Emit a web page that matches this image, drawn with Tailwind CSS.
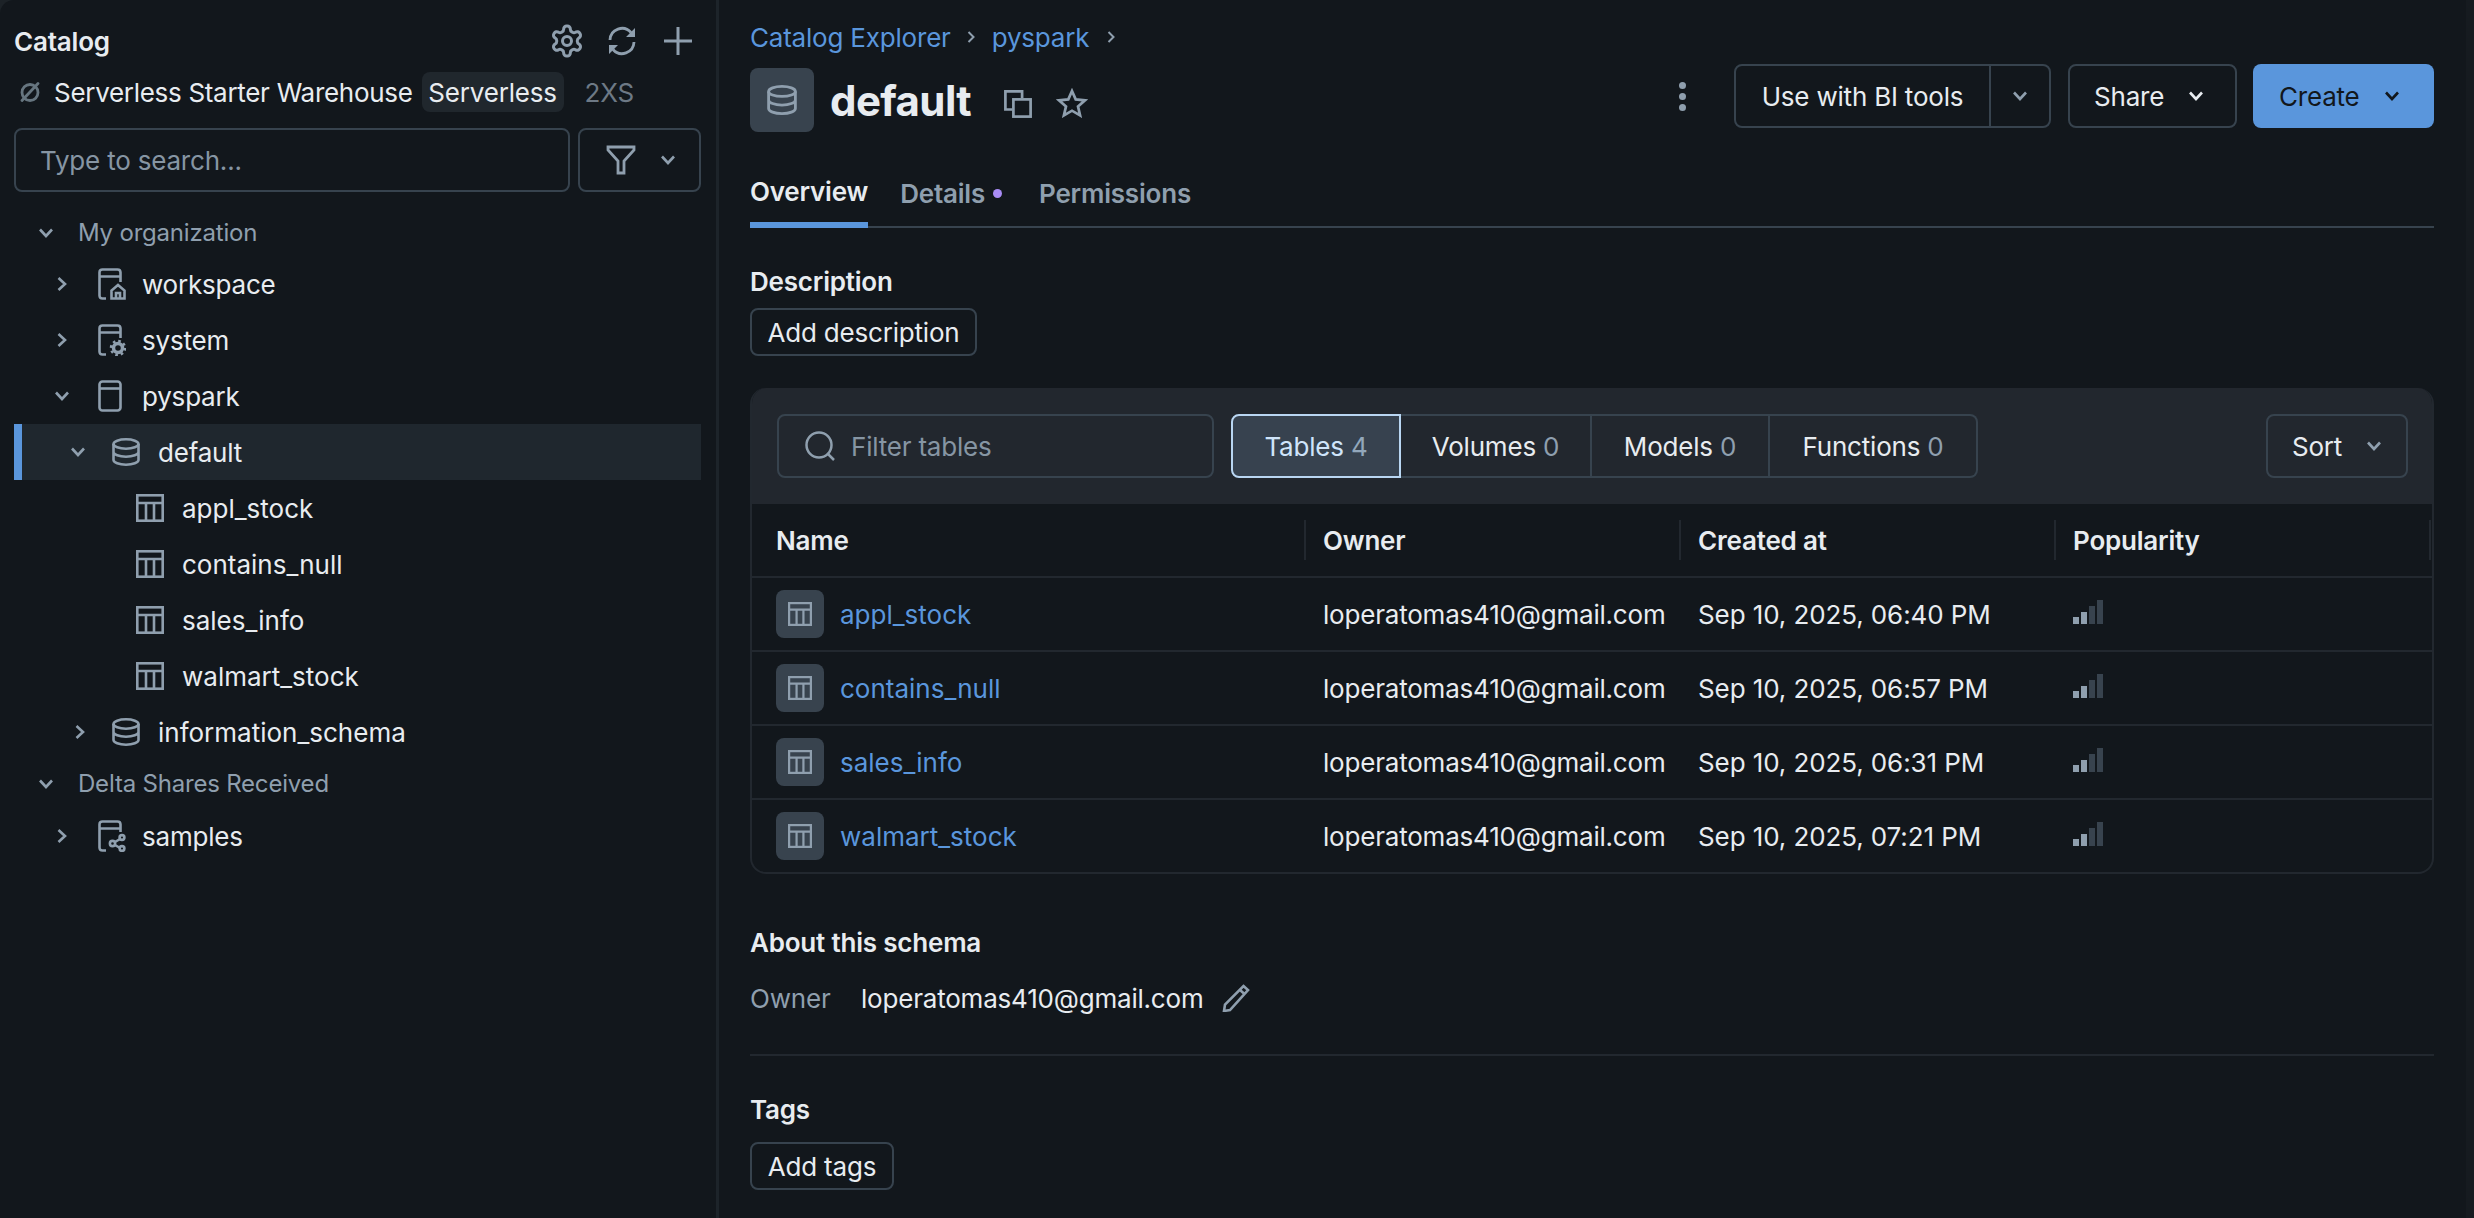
<!DOCTYPE html>
<html lang="en">
<head>
  <meta charset="utf-8">
  <title>Catalog</title>
  <script src="https://cdn.jsdelivr.net/npm/@tailwindcss/browser@4"></script>
</head>
<body class="bg-[#1c2227] font-['Inter','Liberation_Sans',sans-serif] text-[26px] tracking-[-0.2px] text-[#e8ecf0] overflow-hidden">
  <svg class="hidden">
    <symbol id="chev-d" viewBox="0 0 16 12"><path d="M2 2.5 8 9l6-6.500" fill="none" stroke="currentColor" stroke-width="2.6"/></symbol>
    <symbol id="chev-r" viewBox="0 0 12 16"><path d="M2.500 2 9 8l-6.500 6" fill="none" stroke="currentColor" stroke-width="2.6"/></symbol>
    <symbol id="db" viewBox="0 0 28 28"><g fill="none" stroke="currentColor" stroke-width="2.600"><ellipse cx="14" cy="6" rx="12.500" ry="4.700"/><path d="M1.500 6v16c0 2.600 5.600 4.700 12.500 4.700s12.500-2.100 12.500-4.700V6M1.500 14c0 2.600 5.600 4.700 12.500 4.700s12.500-2.100 12.500-4.700"/></g></symbol>
    <symbol id="tbl" viewBox="0 0 28 28"><g fill="none" stroke="currentColor" stroke-width="2.600"><rect x="1.300" y="1.300" width="25.400" height="25.400"/><path d="M1 9h26M10 9v18M18 9v18"/></g></symbol>
    <symbol id="cat-home" viewBox="0 0 28 32"><g fill="none" stroke="currentColor" stroke-width="2.600"><path d="M8 30.500H4.500q-3 0-3-3V4.500q0-3 3-3h15q3 0 3 3V14M1.500 8.500h21"/><path d="M13.500 30.500v-8l6.500-5.500 6.500 5.500v8zM18 30v-5h4v5"/></g></symbol>
    <symbol id="cat-gear" viewBox="0 0 28 32"><g fill="none" stroke="currentColor" stroke-width="2.600"><path d="M8 30.500H4.500q-3 0-3-3V4.500q0-3 3-3h15q3 0 3 3V14M1.500 8.500h21"/></g><circle cx="20" cy="24" r="4.500" fill="none" stroke="currentColor" stroke-width="3.500"/><circle cx="20" cy="24" r="7" fill="none" stroke="currentColor" stroke-width="2.500" stroke-dasharray="2.600 2.900"/></symbol>
    <symbol id="cat-share" viewBox="0 0 28 32"><g fill="none" stroke="currentColor" stroke-width="2.600"><path d="M8 30.500H4.500q-3 0-3-3V4.500q0-3 3-3h15q3 0 3 3V12M1.500 8.500h21"/><circle cx="14.500" cy="23.500" r="2.600"/><circle cx="24" cy="17.500" r="2.400"/><circle cx="24" cy="28.500" r="2.400"/><path d="m17 22 5-3M17 25l5 3"/></g></symbol>
    <symbol id="cat" viewBox="0 0 28 32"><g fill="none" stroke="currentColor" stroke-width="2.600"><rect x="1.500" y="1.500" width="21" height="29" rx="3"/><path d="M1.500 8.500h21"/></g></symbol>
  </svg>

  <div class="flex h-[1218px] w-[2474px] overflow-hidden rounded-tl-[14px] bg-[#12171c]">
    <aside class="w-[719px] shrink-0 border-r-[3px] border-[#1d242a] pl-[14px] pr-[15px]">
      <div class="mt-[21px] flex h-[40px] items-center">
        <span class="font-semibold">Catalog</span>
        <div class="ml-auto flex items-center text-[#8f9fae]">
          <svg class="mr-[22px]" width="36" height="36" viewBox="0 0 24 24" fill="none" stroke="currentColor" stroke-width="2"><path d="M12.220 2h-.44a2 2 0 0 0-2 2v.18a2 2 0 0 1-1 1.730l-.43.25a2 2 0 0 1-2 0l-.15-.08a2 2 0 0 0-2.730.73l-.22.38a2 2 0 0 0 .73 2.730l.15.1a2 2 0 0 1 1 1.720v.51a2 2 0 0 1-1 1.740l-.15.09a2 2 0 0 0-.73 2.730l.22.38a2 2 0 0 0 2.730.73l.15-.08a2 2 0 0 1 2 0l.43.25a2 2 0 0 1 1 1.730V20a2 2 0 0 0 2 2h.44a2 2 0 0 0 2-2v-.18a2 2 0 0 1 1-1.730l.43-.25a2 2 0 0 1 2 0l.15.08a2 2 0 0 0 2.730-.73l.22-.39a2 2 0 0 0-.73-2.730l-.15-.08a2 2 0 0 1-1-1.740v-.5a2 2 0 0 1 1-1.740l.15-.09a2 2 0 0 0 .73-2.730l-.22-.38a2 2 0 0 0-2.730-.73l-.15.08a2 2 0 0 1-2 0l-.43-.25a2 2 0 0 1-1-1.730V4a2 2 0 0 0-2-2z"/><circle cx="12" cy="12" r="3"/></svg>
          <svg class="mr-[26px]" width="30" height="30" viewBox="0 0 30 30" fill="none" stroke="currentColor" stroke-width="2.800"><path d="M3 14A12 12 0 0 1 24 6.500M27 16A12 12 0 0 1 6 23.500"/><path d="M28 2v9h-9zM2 28v-9h9z" fill="currentColor" stroke="none"/></svg>
          <svg class="mr-[8px]" width="30" height="30" viewBox="0 0 30 30" stroke="currentColor" stroke-width="3"><path d="M15 1v28M1 15h28"/></svg>
        </div>
      </div>

      <div class="mt-[11px] flex h-[40px] items-center">
        <svg class="ml-[6px] mr-[14px]" width="20" height="20" viewBox="0 0 20 20" fill="none" stroke="#66757f" stroke-width="2.800" stroke-linecap="round"><circle cx="10" cy="10.500" r="8"/><path d="M2 18.500 18 1.500"/></svg>
        <span class="tracking-[-0.3px]">Serverless Starter Warehouse</span>
        <span class="ml-[9px] flex h-[40px] w-[142px] items-center justify-center rounded-lg bg-[#20272d]">Serverless</span>
        <span class="ml-[21px] text-[#6d7985]">2XS</span>
      </div>

      <div class="mt-[16px] flex h-[64px] gap-[8px]">
        <div class="flex h-[64px] w-[557px] items-center rounded-lg border-2 border-[#37434e] pl-[24px] text-[#8695a3]">Type to search...</div>
        <div class="flex h-[64px] w-[123px] items-center rounded-lg border-2 border-[#37434e] pl-[26px] text-[#8f9fae]">
          <svg width="30" height="30" viewBox="0 0 30 30" fill="none" stroke="currentColor" stroke-width="2.800"><path d="M2 2h26v3L18 16v12h-6V16L2 5z"/></svg>
          <svg class="ml-[24px]" width="16" height="12"><use href="#chev-d"/></svg>
        </div>
      </div>

      <ul class="mt-[18px] list-none">
        <li class="flex h-[46px] items-center pl-[24px] text-[24px] text-[#8f9fae]">
          <svg class="mr-[24px]" width="16" height="12"><use href="#chev-d"/></svg>My organization
        </li>
        <li class="flex h-[56px] items-center pl-[42px]">
          <svg class="mr-[30px] text-[#8f9fae]" width="12" height="16"><use href="#chev-r"/></svg>
          <svg class="mr-[16px] text-[#8f9fae]" width="28" height="32"><use href="#cat-home"/></svg>workspace
        </li>
        <li class="flex h-[56px] items-center pl-[42px]">
          <svg class="mr-[30px] text-[#8f9fae]" width="12" height="16"><use href="#chev-r"/></svg>
          <svg class="mr-[16px] text-[#8f9fae]" width="28" height="32"><use href="#cat-gear"/></svg>system
        </li>
        <li class="flex h-[56px] items-center pl-[40px]">
          <svg class="mr-[28px] text-[#8f9fae]" width="16" height="12"><use href="#chev-d"/></svg>
          <svg class="mr-[16px] text-[#8f9fae]" width="28" height="32"><use href="#cat"/></svg>pyspark
        </li>
        <li class="flex h-[56px] items-center border-l-8 border-[#5a96dc] bg-[#1f272e] pl-[48px]">
          <svg class="mr-[26px] text-[#8f9fae]" width="16" height="12"><use href="#chev-d"/></svg>
          <svg class="mr-[18px] text-[#8f9fae]" width="28" height="28"><use href="#db"/></svg>default
        </li>
        <li class="flex h-[56px] items-center pl-[122px] tracking-normal"><svg class="mr-[18px] text-[#8f9fae]" width="28" height="28"><use href="#tbl"/></svg>appl_stock</li>
        <li class="flex h-[56px] items-center pl-[122px] tracking-normal"><svg class="mr-[18px] text-[#8f9fae]" width="28" height="28"><use href="#tbl"/></svg>contains_null</li>
        <li class="flex h-[56px] items-center pl-[122px] tracking-normal"><svg class="mr-[18px] text-[#8f9fae]" width="28" height="28"><use href="#tbl"/></svg>sales_info</li>
        <li class="flex h-[56px] items-center pl-[122px] tracking-normal"><svg class="mr-[18px] text-[#8f9fae]" width="28" height="28"><use href="#tbl"/></svg>walmart_stock</li>
        <li class="flex h-[56px] items-center pl-[60px] tracking-normal">
          <svg class="mr-[26px] text-[#8f9fae]" width="12" height="16"><use href="#chev-r"/></svg>
          <svg class="mr-[18px] text-[#8f9fae]" width="28" height="28"><use href="#db"/></svg>information_schema
        </li>
        <li class="flex h-[48px] items-center pl-[24px] text-[24px] text-[#8f9fae]">
          <svg class="mr-[24px]" width="16" height="12"><use href="#chev-d"/></svg>Delta Shares Received
        </li>
        <li class="flex h-[56px] items-center pl-[42px]">
          <svg class="mr-[30px] text-[#8f9fae]" width="12" height="16"><use href="#chev-r"/></svg>
          <svg class="mr-[16px] text-[#8f9fae]" width="28" height="32"><use href="#cat-share"/></svg>samples
        </li>
      </ul>
    </aside>

    <main class="min-w-0 flex-1 pl-[31px] pr-[32px]">
      <nav class="mt-[17px] flex h-[40px] items-center text-[#5a96dc]">
        <span>Catalog Explorer</span>
        <svg class="mx-[16px] text-[#8f9fae]" width="9" height="14" viewBox="0 0 9 14" fill="none" stroke="currentColor" stroke-width="2"><path d="m1.500 2 5 5-5 5"/></svg>
        <span>pyspark</span>
        <svg class="ml-[18px] text-[#8f9fae]" width="9" height="14" viewBox="0 0 9 14" fill="none" stroke="currentColor" stroke-width="2"><path d="m1.500 2 5 5-5 5"/></svg>
      </nav>

      <div class="mt-[7px] flex h-[68px] items-start">
        <div class="mt-[4px] flex h-[64px] w-[64px] items-center justify-center rounded-lg bg-[#38434e] text-[#8f9fae]">
          <svg width="30" height="30"><use href="#db"/></svg>
        </div>
        <h1 class="ml-[16px] mt-[9px] text-[42px] font-bold leading-[56px] tracking-[-0.6px]">default</h1>
        <svg class="ml-[33px] mt-[26px] text-[#8f9fae]" width="28" height="28" viewBox="0 0 28 28" fill="none" stroke="currentColor" stroke-width="2.700"><path d="M8 19.500H1.400V1.400h16.700V8"/><rect x="9.400" y="9.400" width="17.200" height="17.200"/></svg>
        <svg class="ml-[24px] mt-[24px] text-[#8f9fae]" width="32" height="30" viewBox="0 0 32 30" fill="none" stroke="currentColor" stroke-width="2.700"><path d="m16 3 3.700 8.400 9.300.9-7 6.100 2.100 9L16 22.700 7.900 27.400l2.100-9-7-6.100 9.300-.9z"/></svg>
        <div class="ml-auto flex items-center">
          <div class="mr-[48px] flex flex-col gap-[4px]">
            <span class="h-[7px] w-[7px] rounded-full bg-[#8f9fae]"></span>
            <span class="h-[7px] w-[7px] rounded-full bg-[#8f9fae]"></span>
            <span class="h-[7px] w-[7px] rounded-full bg-[#8f9fae]"></span>
          </div>
          <div class="flex h-[64px] w-[317px] items-center rounded-lg border-2 border-[#37434e]">
            <span class="flex w-[253px] justify-center">Use with BI tools</span>
            <span class="flex h-full flex-1 items-center justify-center border-l-2 border-[#37434e] text-[#8f9fae]"><svg width="16" height="12"><use href="#chev-d"/></svg></span>
          </div>
          <div class="ml-[17px] flex h-[64px] w-[169px] items-center rounded-lg border-2 border-[#37434e] pl-[24px]">
            Share<svg class="ml-[24px]" width="16" height="12"><use href="#chev-d"/></svg>
          </div>
          <div class="ml-[16px] flex h-[64px] w-[181px] items-center rounded-lg bg-[#5a96dc] pl-[26px] text-[#12171c]">
            Create<svg class="ml-[24px]" width="16" height="12"><use href="#chev-d"/></svg>
          </div>
        </div>
      </div>

      <div class="mt-[28px] flex h-[68px] gap-[32px] border-b-2 border-[#37434e] font-semibold text-[#8f9fae]">
        <span class="-mb-[2px] flex h-[68px] items-center border-b-[6px] border-[#5a96dc] text-[#e8ecf0]">Overview</span>
        <span class="flex h-[66px] items-center">Details<span class="ml-[8px] h-[9px] w-[9px] rounded-full bg-[#a98cf5]"></span></span>
        <span class="ml-[5px] flex h-[66px] items-center">Permissions</span>
      </div>

      <h2 class="mt-[33px] flex h-[40px] items-center font-semibold">Description</h2>
      <div class="mt-[7px] flex h-[48px] w-[227px] items-center justify-center rounded-lg border-2 border-[#37434e]">Add description</div>

      <section class="mt-[32px] overflow-hidden rounded-2xl border-2 border-t-0 border-[#22282f]">
        <div class="-mx-[2px] flex h-[116px] items-center bg-[#22272e] pl-[27px] pr-[26px]">
          <div class="flex h-[64px] w-[437px] items-center rounded-lg border-2 border-[#37434e] pl-[26px] text-[#8695a3]">
            <svg class="mr-[16px] text-[#8f9fae]" width="30" height="30" viewBox="0 0 30 30" fill="none" stroke="currentColor" stroke-width="2.500"><circle cx="14" cy="14" r="12.500"/><path d="m23 23 6 6"/></svg>Filter tables
          </div>
          <div class="ml-[17px] flex h-[64px]">
            <span class="flex w-[170px] items-center justify-center rounded-l-lg border-2 border-[#b9d6f2] bg-[#37424f] text-[#cfe4fa]">Tables&nbsp;<span class="text-[#92a7bb]">4</span></span>
            <span class="flex w-[191px] items-center justify-center border-y-2 border-r-2 border-[#37434e]">Volumes&nbsp;<span class="text-[#8f9fae]">0</span></span>
            <span class="flex w-[178px] items-center justify-center border-y-2 border-r-2 border-[#37434e]">Models&nbsp;<span class="text-[#8f9fae]">0</span></span>
            <span class="flex w-[208px] items-center justify-center rounded-r-lg border-y-2 border-r-2 border-[#37434e]">Functions&nbsp;<span class="text-[#8f9fae]">0</span></span>
          </div>
          <div class="ml-auto flex h-[64px] w-[142px] items-center rounded-lg border-2 border-[#37434e] pl-[24px]">
            Sort<svg class="ml-[24px] text-[#8f9fae]" width="16" height="12"><use href="#chev-d"/></svg>
          </div>
        </div>

        <div class="grid h-[74px] grid-cols-[554px_375px_375px_375px_1fr] items-center border-b-2 border-[#22282f] font-semibold">
          <div class="flex h-[40px] items-center border-r-2 border-[#22282f] pl-[24px]">Name</div>
          <div class="flex h-[40px] items-center border-r-2 border-[#22282f] pl-[17px]">Owner</div>
          <div class="flex h-[40px] items-center border-r-2 border-[#22282f] pl-[17px]">Created at</div>
          <div class="flex h-[40px] items-center border-r-2 border-[#22282f] pl-[17px]">Popularity</div>
        </div>

        <div class="grid h-[74px] grid-cols-[554px_375px_375px_375px_1fr] items-center border-b-2 border-[#22282f]">
          <div class="flex items-center pl-[24px] tracking-normal text-[#5a96dc]">
            <span class="mr-[16px] flex h-[48px] w-[48px] items-center justify-center rounded-lg bg-[#38434e] text-[#8f9fae]"><svg width="24" height="24"><use href="#tbl"/></svg></span>appl_stock
          </div>
          <div class="pl-[17px]">loperatomas410@gmail.com</div>
          <div class="pl-[17px] tracking-[-0.1px]">Sep 10, 2025, 06:40 PM</div>
          <div class="flex items-end gap-[2px] pb-[4px] pl-[17px]"><i class="h-[7px] w-[6px] bg-[#8f9fae]"></i><i class="h-[12px] w-[6px] bg-[#8f9fae]"></i><i class="h-[18px] w-[6px] bg-[#38434e]"></i><i class="h-[24px] w-[6px] bg-[#38434e]"></i></div>
        </div>

        <div class="grid h-[74px] grid-cols-[554px_375px_375px_375px_1fr] items-center border-b-2 border-[#22282f]">
          <div class="flex items-center pl-[24px] tracking-normal text-[#5a96dc]">
            <span class="mr-[16px] flex h-[48px] w-[48px] items-center justify-center rounded-lg bg-[#38434e] text-[#8f9fae]"><svg width="24" height="24"><use href="#tbl"/></svg></span>contains_null
          </div>
          <div class="pl-[17px]">loperatomas410@gmail.com</div>
          <div class="pl-[17px] tracking-[-0.1px]">Sep 10, 2025, 06:57 PM</div>
          <div class="flex items-end gap-[2px] pb-[4px] pl-[17px]"><i class="h-[7px] w-[6px] bg-[#8f9fae]"></i><i class="h-[12px] w-[6px] bg-[#8f9fae]"></i><i class="h-[18px] w-[6px] bg-[#38434e]"></i><i class="h-[24px] w-[6px] bg-[#38434e]"></i></div>
        </div>

        <div class="grid h-[74px] grid-cols-[554px_375px_375px_375px_1fr] items-center border-b-2 border-[#22282f]">
          <div class="flex items-center pl-[24px] tracking-normal text-[#5a96dc]">
            <span class="mr-[16px] flex h-[48px] w-[48px] items-center justify-center rounded-lg bg-[#38434e] text-[#8f9fae]"><svg width="24" height="24"><use href="#tbl"/></svg></span>sales_info
          </div>
          <div class="pl-[17px]">loperatomas410@gmail.com</div>
          <div class="pl-[17px] tracking-[-0.1px]">Sep 10, 2025, 06:31 PM</div>
          <div class="flex items-end gap-[2px] pb-[4px] pl-[17px]"><i class="h-[7px] w-[6px] bg-[#8f9fae]"></i><i class="h-[12px] w-[6px] bg-[#8f9fae]"></i><i class="h-[18px] w-[6px] bg-[#38434e]"></i><i class="h-[24px] w-[6px] bg-[#38434e]"></i></div>
        </div>

        <div class="grid h-[72px] grid-cols-[554px_375px_375px_375px_1fr] items-center">
          <div class="flex items-center pl-[24px] tracking-normal text-[#5a96dc]">
            <span class="mr-[16px] flex h-[48px] w-[48px] items-center justify-center rounded-lg bg-[#38434e] text-[#8f9fae]"><svg width="24" height="24"><use href="#tbl"/></svg></span>walmart_stock
          </div>
          <div class="pl-[17px]">loperatomas410@gmail.com</div>
          <div class="pl-[17px] tracking-[-0.1px]">Sep 10, 2025, 07:21 PM</div>
          <div class="flex items-end gap-[2px] pb-[4px] pl-[17px]"><i class="h-[7px] w-[6px] bg-[#8f9fae]"></i><i class="h-[12px] w-[6px] bg-[#8f9fae]"></i><i class="h-[18px] w-[6px] bg-[#38434e]"></i><i class="h-[24px] w-[6px] bg-[#38434e]"></i></div>
        </div>
      </section>

      <h2 class="mt-[48px] flex h-[40px] items-center font-semibold">About this schema</h2>
      <div class="mt-[16px] flex h-[40px] items-center">
        <span class="w-[111px] text-[#8f9fae]">Owner</span>
        <span>loperatomas410@gmail.com</span>
        <svg class="ml-[18px] text-[#8f9fae]" width="28" height="28" viewBox="0 0 28 28" fill="none" stroke="currentColor" stroke-width="2.600"><path d="M21.500 2 26 6 8 26l-6 1 1-6.500zM18 6l4.500 4"/></svg>
      </div>
      <div class="mt-[36px] border-t-2 border-[#22282f]"></div>
      <h2 class="mt-[33px] flex h-[40px] items-center font-semibold">Tags</h2>
      <div class="mt-[13px] flex h-[48px] w-[144px] items-center justify-center rounded-lg border-2 border-[#37434e]">Add tags</div>
    </main>

    <div class="w-[8px] shrink-0 bg-[#161b20]"></div>
  </div>
</body>
</html>
